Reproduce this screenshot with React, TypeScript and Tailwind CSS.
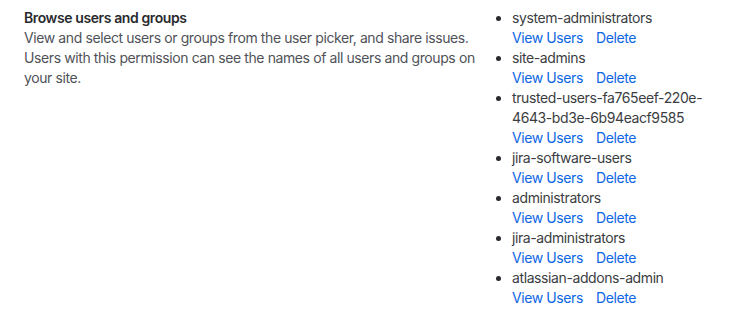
const groups = [
  "system-administrators",
  "site-admins",
  "trusted-users-fa765eef-220e-4643-bd3e-6b94eacf9585",
  "jira-software-users",
  "administrators",
  "jira-administrators",
  "atlassian-addons-admin",
];

export default function App() {
  return (
    <div
      className="flex w-[745px] bg-white pt-2 pl-6 text-[14px] leading-5 tracking-[-0.4px] text-[#292A2E]"
      style={{ fontFamily: "Inter, 'Noto Sans', sans-serif" }}
    >
      <div className="w-[460px] shrink-0">
        <h3 className="font-semibold text-[#292A2E]">Browse users and groups</h3>
        <p className="text-[#505258]">
          View and select users or groups from the user picker, and share issues. Users with
          this permission can see the names of all users and groups on your site.
        </p>
      </div>
      <ul className="w-[248px] list-disc pl-7 text-[#3B3D42] marker:text-[#292A2E]">
        {groups.map((g) => (
          <li key={g} className="break-words">
            <div>{g}</div>
            <div className="flex gap-[13px] text-[#0C66E4]">
              <a href="#">View Users</a>
              <a href="#">Delete</a>
            </div>
          </li>
        ))}
      </ul>
    </div>
  );
}
